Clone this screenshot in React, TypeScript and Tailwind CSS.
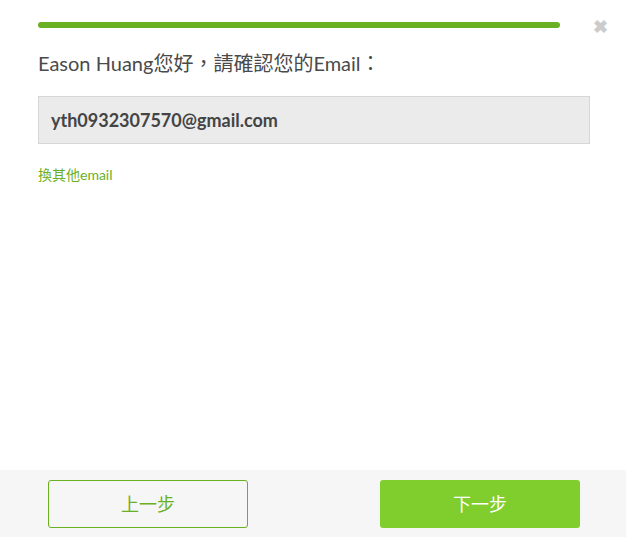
export default function App() {
  const font = { fontFamily: 'Lato, "Noto Sans CJK TC", sans-serif' }

  return (
    <div style={font} className="relative w-[626px] h-[537px] bg-white flex flex-col">
      <button className="absolute top-[17px] right-[18px] text-[#cccccc] text-[18px] font-bold leading-none">
        ✖
      </button>
      <div className="flex-1 px-[38px] pt-[22px]">
        <div className="h-[6px] w-[522px] rounded-full bg-[#6ab023]" />
        <h2 className="mt-[21px] text-[20px] leading-[28px] text-[#4a4a4a]">
          Eason Huang您好，請確認您的Email：
        </h2>
        <div className="mt-[19px] w-[552px] h-[48px] flex items-center px-[12px] bg-[#ebebeb] border border-[#d6d6d6]">
          <span className="text-[18px] font-bold text-[#444444]">yth0932307570@gmail.com</span>
        </div>
        <a className="block mt-[21px] text-[14px] leading-[20px] text-[#6ab023]">換其他email</a>
      </div>
      <div className="h-[67px] bg-[#f6f6f6] flex items-start justify-between pt-[10px] pl-[48px] pr-[46px]">
        <button className="w-[200px] h-[48px] rounded-[3px] border border-[#6ab023] text-[#6ab023] text-[18px]">
          上一步
        </button>
        <button className="w-[200px] h-[48px] rounded-[3px] bg-[#80cd2e] text-white text-[18px]">
          下一步
        </button>
      </div>
    </div>
  )
}
